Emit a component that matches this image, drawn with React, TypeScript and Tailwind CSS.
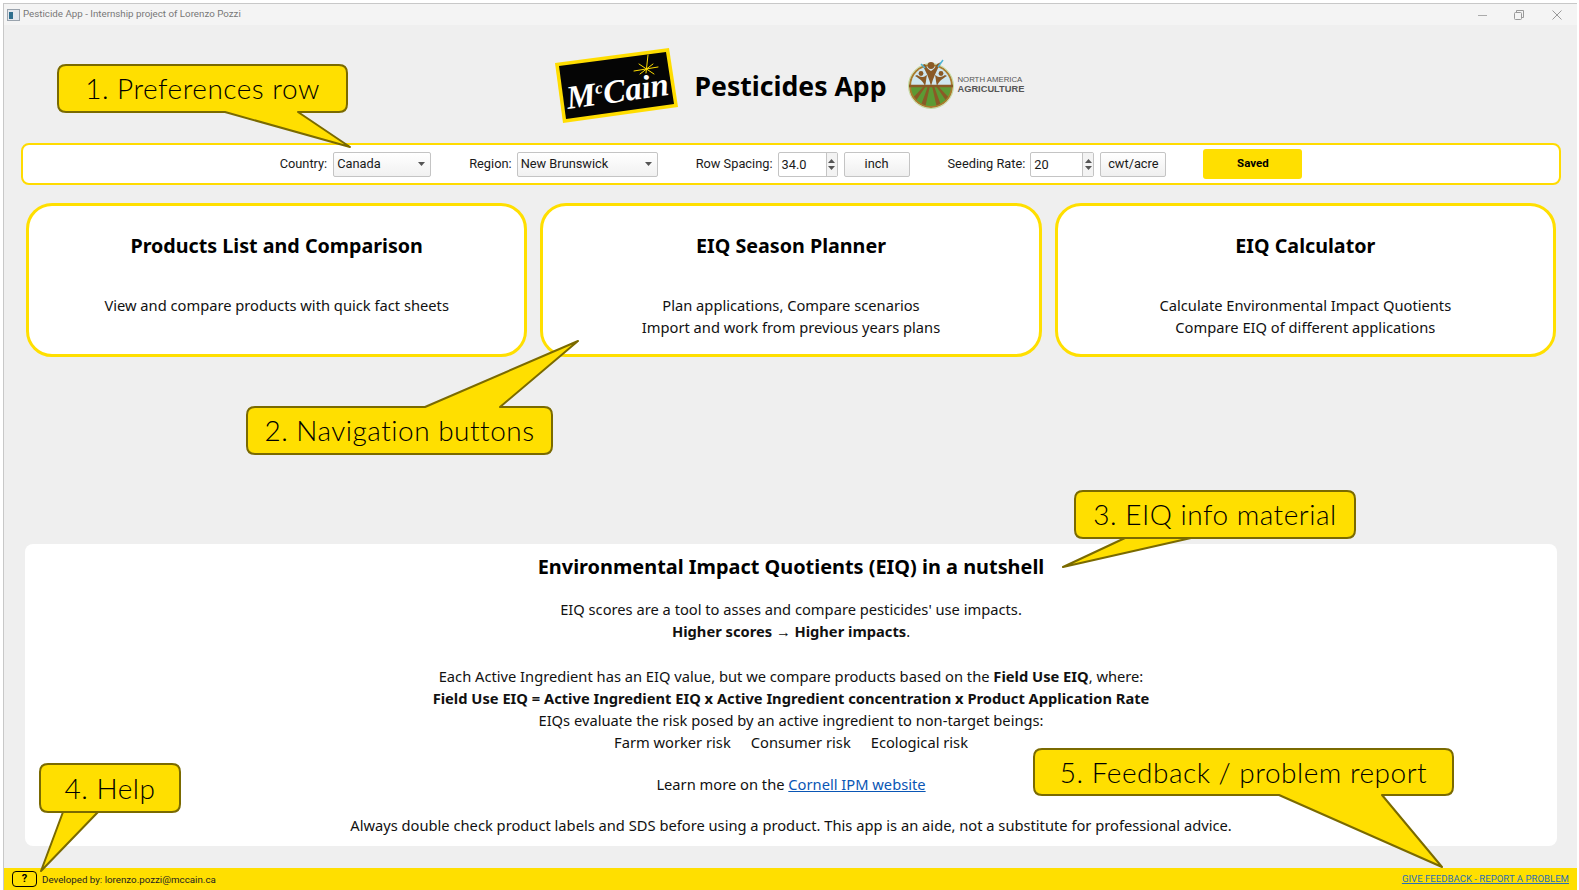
import type { ReactNode } from 'react'

const APP_FONT = '[font-family:"Noto_Sans",sans-serif]'

function calloutPath(w: number, h: number, tail: [number, number][]) {
  // rounded box with a tail cut into the top or the bottom edge, going left to right
  const r = 8
  const onBottom = tail[0][1] >= h
  const [a, tip, b] = tail
  const topEdge = onBottom ? '' : `L${a[0]} 0 L${tip[0]} ${tip[1]} L${b[0]} 0 `
  const bottomEdge = onBottom ? `L${b[0]} ${h} L${tip[0]} ${tip[1]} L${a[0]} ${h} ` : ''
  return (
    `M${r} 0 ${topEdge}L${w - r} 0 Q${w} 0 ${w} ${r} L${w} ${h - r} Q${w} ${h} ${w - r} ${h} ` +
    `${bottomEdge}L${r} ${h} Q0 ${h} 0 ${h - r} L0 ${r} Q0 0 ${r} 0 Z`
  )
}

interface CalloutProps {
  className: string
  w: number
  h: number
  tail: [number, number][]
  children: ReactNode
}

function Callout({ className, w, h, tail, children }: CalloutProps) {
  return (
    <div className={`absolute flex items-center justify-center ${className}`}>
      <svg className="absolute inset-0 overflow-visible" width={w} height={h}>
        <path d={calloutPath(w, h, tail)} fill="#ffdf00" stroke="#7a6a00" strokeWidth="2" strokeLinejoin="round" />
      </svg>
      <span className='relative -mt-[1px] whitespace-nowrap text-[28px] leading-none font-light tracking-[0.5px] text-black [font-family:"Lato",sans-serif]'>
        {children}
      </span>
    </div>
  )
}

function McCainLogo() {
  return (
    <svg width="126" height="78" viewBox="0 0 126 78" className="shrink-0">
      <polygon points="1,16 115,1 124,60 9,76" fill="#ffdd00" />
      <polygon points="5,19 112,5 120,57 12,72" fill="#050505" />
      <text
        x="63"
        y="55"
        textAnchor="middle"
        transform="rotate(-8 63 40)"
        fill="#fff"
        fontSize="33"
        fontStyle="italic"
        fontWeight="700"
        fontFamily='"Liberation Serif", serif'
      >
        M
        <tspan fontSize="17" dy="-11">
          c
        </tspan>
        <tspan dy="11">Cain</tspan>
      </text>
      <g stroke="#ffdd00" strokeWidth="1" strokeLinecap="round">
        <line x1="94" y1="8" x2="92" y2="26" />
        <line x1="80" y1="24" x2="104" y2="20" />
        <line x1="85" y1="17" x2="100" y2="27" />
        <line x1="86" y1="27" x2="99" y2="17" />
      </g>
    </svg>
  )
}

function AgricultureLogo() {
  return (
    <div className="flex shrink-0 items-center gap-[3px]">
      <svg width="46" height="50" viewBox="0 0 46 50" className="-mt-[5px]">
        <defs>
          <clipPath id="agri-disc">
            <circle cx="23" cy="27" r="20" />
          </clipPath>
        </defs>
        <circle cx="23" cy="27" r="22" fill="#a97b2c" />
        <circle cx="23" cy="27" r="22.5" fill="none" stroke="#b5d68a" strokeWidth="0.8" />
        <g clipPath="url(#agri-disc)">
          <rect x="0" y="5" width="46" height="22" fill="#cfe6ee" />
          <rect x="0" y="27" width="46" height="22" fill="#5c9a34" />
          <path d="M20 27 L12 49 L17 49 L22 27 Z M24 27 L29 49 L34 49 L26 27 Z M16 27 L2 42 L5 46 L18 27 Z M30 27 L44 42 L41 46 L28 27 Z" fill="#8a5a26" />
        </g>
        <path d="M1 27 H45" stroke="#8a5a26" strokeWidth="2.5" />
        <path d="M23 27 C21 19 18 12 14 6 L17 5 C19 9 21 11 23 12 C25 11 27 9 29 5 L33 3 C29 11 25 19 23 27 Z" fill="#8a5a26" />
        <circle cx="23" cy="6.5" r="3.4" fill="#8a5a26" />
        <path d="M17 27 C15 22 12 20 7 17 L9 16 C12 18 14 18 15 18 C16 18 17 17 19 16 C18 20 18 24 17 27 Z" fill="#8a5a26" />
        <circle cx="13" cy="14.5" r="2.4" fill="#8a5a26" />
        <path d="M29 27 C31 22 34 20 39 17 L37 16 C34 18 32 18 31 18 C30 18 29 17 27 16 C28 20 28 24 29 27 Z" fill="#8a5a26" />
        <circle cx="33" cy="14.5" r="2.4" fill="#8a5a26" />
        <path d="M13 5 L17 9 M35 1 L30 8" stroke="#4fb5d8" strokeWidth="1.5" />
      </svg>
      <div className='-mt-[3px] w-[67px] text-[#555] [font-family:"Liberation_Sans",sans-serif]'>
        <div className="text-[7.8px] leading-[9px] whitespace-nowrap">NORTH AMERICA</div>
        <div className="text-[9.3px] leading-[10px] font-bold whitespace-nowrap">AGRICULTURE</div>
      </div>
    </div>
  )
}

function ArrowDown() {
  return (
    <svg width="7" height="4" viewBox="0 0 7 4">
      <path d="M0 0 H7 L3.5 4 Z" fill="#555" />
    </svg>
  )
}

function ComboBox({ value, className }: { value: string; className: string }) {
  return (
    <div
      className={`flex h-[25px] items-center justify-between rounded-[2px] border border-[#c4c4c4] bg-gradient-to-b from-white to-[#f1f1f1] pr-[5px] pl-[3px] ${className}`}
    >
      <span>{value}</span>
      <ArrowDown />
    </div>
  )
}

function SpinBox({ value, className }: { value: string; className: string }) {
  return (
    <div className={`flex h-[25px] items-stretch rounded-[2px] border border-[#c4c4c4] bg-white ${className}`}>
      <span className="flex-1 pl-[3px] leading-[23px]">{value}</span>
      <div className="flex w-[11px] flex-col items-center justify-center gap-[3px] border-l border-[#c4c4c4] bg-[#f3f3f3]">
        <svg width="7" height="4" viewBox="0 0 7 4">
          <path d="M0 4 H7 L3.5 0 Z" fill="#555" />
        </svg>
        <ArrowDown />
      </div>
    </div>
  )
}

function UnitButton({ label, className }: { label: string; className: string }) {
  return (
    <div
      className={`flex h-[25px] items-center justify-center rounded-[2px] border border-[#c4c4c4] bg-gradient-to-b from-white to-[#efefef] ${className}`}
    >
      {label}
    </div>
  )
}

function PreferencesRow() {
  return (
    <div className='mr-[16px] ml-[17px] flex h-[42px] shrink-0 items-center justify-center rounded-[8px] border-2 border-[#ffdb00] bg-white text-[12.8px] text-[#1a1a1a] [font-family:"Roboto",sans-serif]'>
      <span className="mr-[6px]">Country:</span>
      <ComboBox value="Canada" className="w-[98px]" />
      <span className="mr-[5px] ml-[38px]">Region:</span>
      <ComboBox value="New Brunswick" className="w-[141px]" />
      <span className="mr-[5px] ml-[38px]">Row Spacing:</span>
      <SpinBox value="34.0" className="w-[60px]" />
      <UnitButton label="inch" className="ml-[6px] w-[66px]" />
      <span className="mr-[5px] ml-[38px]">Seeding Rate:</span>
      <SpinBox value="20" className="w-[64px]" />
      <UnitButton label="cwt/acre" className="ml-[6px] w-[66px]" />
      <div className="ml-[37px] flex h-[30px] w-[99px] items-center justify-center rounded-[3px] bg-[#ffdf00] text-[11.5px] font-bold text-black">
        Saved
      </div>
    </div>
  )
}

function NavCard({ title, lines }: { title: string; lines: string[] }) {
  return (
    <div className="flex h-[154px] flex-col items-center rounded-[26px] border-[3px] border-[#ffdf00] bg-white pt-[25px] text-black">
      <h2 className="text-[19.7px] leading-[30px] font-bold">{title}</h2>
      <div className="mt-[33px] text-center text-[14.7px] leading-[22px] text-[#111]">
        {lines.map((line) => (
          <div key={line}>{line}</div>
        ))}
      </div>
    </div>
  )
}

function InfoPanel() {
  return (
    <div className="mt-auto mr-[20px] ml-[21px] flex h-[302px] flex-col items-center rounded-[8px] bg-white pt-[9px] text-center text-[14.7px] leading-[22px] text-[#111]">
      <h2 className="text-[19.9px] leading-[28px] font-bold text-black">Environmental Impact Quotients (EIQ) in a nutshell</h2>
      <p className="mt-[17px]">EIQ scores are a tool to asses and compare pesticides' use impacts.</p>
      <p>
        <b>
          Higher scores <span className='[font-family:"Liberation_Sans",sans-serif]'>→</span> Higher impacts
        </b>
        .
      </p>
      <p className="mt-[22px]">
        Each Active Ingredient has an EIQ value, but we compare products based on the <b>Field Use EIQ</b>, where:
      </p>
      <p>
        <b>Field Use EIQ = Active Ingredient EIQ x Active Ingredient concentration x Product Application Rate</b>
      </p>
      <p>EIQs evaluate the risk posed by an active ingredient to non-target beings:</p>
      <p className="flex gap-[20px]">
        <span>Farm worker risk</span>
        <span>Consumer risk</span>
        <span>Ecological risk</span>
      </p>
      <p className="mt-[20px]">
        Learn more on the <a className="text-[#0a56b5] underline">Cornell IPM website</a>
      </p>
      <p className="mt-[19px]">
        Always double check product labels and SDS before using a product. This app is an aide, not a substitute for professional advice.
      </p>
    </div>
  )
}

function TitleBar() {
  return (
    <div className='flex h-[21px] shrink-0 items-center bg-[#f4f4f4] pl-[3px] text-[9.75px] text-[#777] [font-family:"Roboto",sans-serif]'>
      <svg width="13" height="12" viewBox="0 0 13 12" className="mr-[3px]">
        <rect x="0.5" y="0.5" width="12" height="11" fill="#e4e8ee" stroke="#9aa3ad" />
        <rect x="2" y="3" width="4" height="7" fill="#2f6f8f" />
      </svg>
      <span>Pesticide App - Internship project of Lorenzo Pozzi</span>
      <div className="ml-auto flex items-center">
        <svg width="10" height="10" viewBox="0 0 10 10" className="mr-[26px]">
          <path d="M0 5.5 H9" stroke="#aaa" />
        </svg>
        <svg width="10" height="10" viewBox="0 0 10 10" className="mr-[28px]">
          <rect x="0.5" y="2.5" width="7" height="7" rx="1" fill="none" stroke="#999" />
          <path d="M2.5 2.5 V0.5 H9.5 V7.5 H7.5" fill="none" stroke="#999" />
        </svg>
        <svg width="10" height="10" viewBox="0 0 10 10" className="mr-[15px]">
          <path d="M0.5 0.5 L9.5 9.5 M9.5 0.5 L0.5 9.5" stroke="#999" />
        </svg>
      </div>
    </div>
  )
}

function StatusBar() {
  return (
    <div className='mt-[22px] flex h-[22px] shrink-0 items-center bg-[#ffdf00] pr-[8px] pl-[8px] text-[9.75px] text-[#222] [font-family:"Roboto",sans-serif]'>
      <div className="mr-[5px] flex h-[16px] w-[25px] items-center justify-center rounded-[4px] border border-black text-[11px] font-bold text-black">
        ?
      </div>
      <span className="mt-[3px]">Developed by: lorenzo.pozzi@mccain.ca</span>
      <a className="mt-[1px] ml-auto text-[9.6px] text-[#2a6fb5] underline">GIVE FEEDBACK - REPORT A PROBLEM</a>
    </div>
  )
}

export default function App() {
  return (
    <div className={`relative h-[890px] w-[1579px] overflow-hidden bg-white pt-[3px] pr-[2px] pl-[3px] ${APP_FONT}`}>
      <div className="flex h-full flex-col border-t border-l border-[#c8c8c8] bg-[#efefef]">
        <TitleBar />
        <header className="flex h-[118px] shrink-0 items-center justify-center pt-[4px] pr-[3px]">
          <McCainLogo />
          <h1 className="mr-[22px] ml-[15px] text-[26.6px] leading-none font-bold text-black">Pesticides App</h1>
          <AgricultureLogo />
        </header>
        <PreferencesRow />
        <div className="mt-[18px] mr-[21px] ml-[22px] grid grid-cols-3 gap-[13px]">
          <NavCard title="Products List and Comparison" lines={['View and compare products with quick fact sheets']} />
          <NavCard title="EIQ Season Planner" lines={['Plan applications, Compare scenarios', 'Import and work from previous years plans']} />
          <NavCard title="EIQ Calculator" lines={['Calculate Environmental Impact Quotients', 'Compare EIQ of different applications']} />
        </div>
        <InfoPanel />
        <StatusBar />
      </div>

      <Callout className="top-[65px] left-[58px] h-[47px] w-[289px]" w={289} h={47} tail={[[167, 47], [292, 82], [240, 47]]}>
        1. Preferences row
      </Callout>
      <Callout className="top-[407px] left-[247px] h-[47px] w-[305px]" w={305} h={47} tail={[[178, 0], [331, -66], [253, 0]]}>
        2. Navigation buttons
      </Callout>
      <Callout className="top-[491px] left-[1075px] h-[47px] w-[280px]" w={280} h={47} tail={[[116, 47], [-12, 76], [50, 47]]}>
        3. EIQ info material
      </Callout>
      <Callout className="top-[764px] left-[40px] h-[48px] w-[140px]" w={140} h={48} tail={[[58, 48], [1, 107], [23, 48]]}>
        4. Help
      </Callout>
      <Callout className="top-[749px] left-[1034px] h-[46px] w-[419px]" w={419} h={46} tail={[[245, 46], [408, 118], [348, 46]]}>
        5. Feedback / problem report
      </Callout>
    </div>
  )
}
